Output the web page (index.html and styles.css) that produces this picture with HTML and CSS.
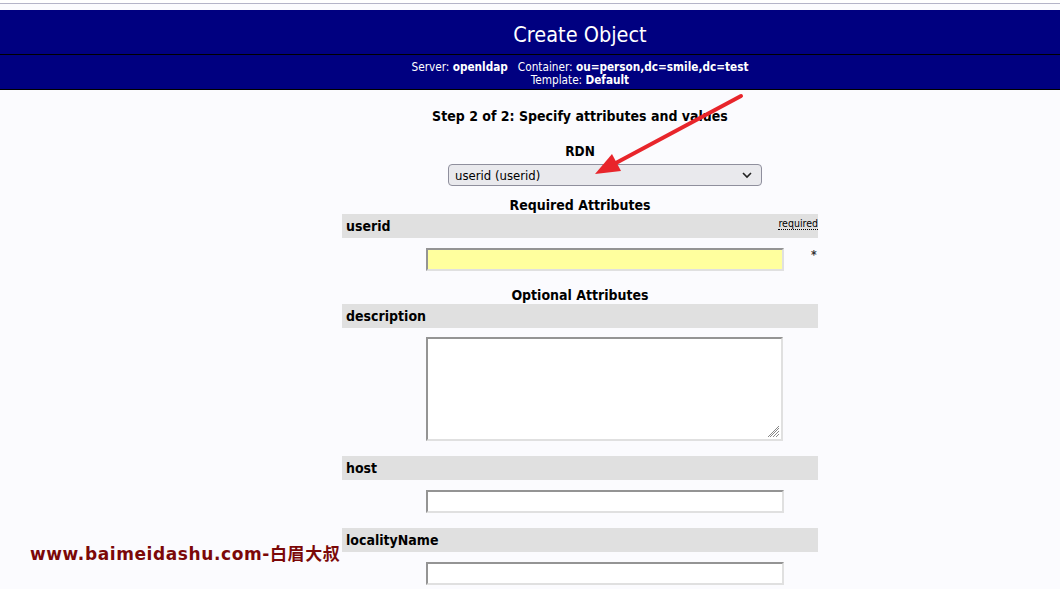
FILE: index.html
```html
<!DOCTYPE html>
<html lang="en">
<head>
    <meta charset="UTF-8">
    <title>Create Object</title>
    <link rel="stylesheet" href="styles.css">
</head>
<body>
    <div class="topline"></div>
    <div class="head-title">Create Object</div>
    <div class="head-sub">
        <div>Server: <b>openldap</b> &nbsp; Container: <b>ou=person,dc=smile,dc=test</b></div>
        <div>Template: <b>Default</b></div>
    </div>

    <div class="page">
        <div class="step">Step 2 of 2: Specify attributes and values</div>

        <div class="rdn-label">RDN</div>
        <div class="rdn-select">
            <span>userid (userid)</span>
            <svg width="12" height="8" viewBox="0 0 12 8"><path d="M2 2l4 4 4-4" fill="none" stroke="#222" stroke-width="1.6"/></svg>
        </div>

        <div class="attrs">
            <div class="group-title">Required Attributes</div>
            <div class="attr-bar"><span>userid</span><span class="req">required</span></div>
            <div class="attr-value">
                <div class="field field-req"></div>
                <span class="star">*</span>
            </div>

            <div class="group-title">Optional Attributes</div>
            <div class="attr-bar"><span>description</span></div>
            <div class="attr-value">
                <div class="field textarea">
                    <svg class="grip" width="12" height="12" viewBox="0 0 12 12"><path d="M11 2L2 11M11 5L5 11M11 8L8 11M11 0L0 11" stroke="#888" stroke-width="1"/></svg>
                </div>
            </div>

            <div class="attr-bar"><span>host</span></div>
            <div class="attr-value">
                <div class="field"></div>
            </div>

            <div class="attr-bar"><span>localityName</span></div>
            <div class="attr-value">
                <div class="field"></div>
            </div>
        </div>
    </div>

    <svg class="arrow" width="1060" height="589" viewBox="0 0 1060 589">
        <line x1="741" y1="96" x2="614" y2="164" stroke="#e8252b" stroke-width="4" stroke-linecap="round"/>
        <polygon points="595,174 612,154 621,171" fill="#e8252b"/>
    </svg>
    <div class="watermark">www.baimeidashu.com-白眉大叔</div>
</body>
</html>
```

FILE: styles.css
```css
body {
    margin: 0;
    background: #fbfbfe;
    font-family: "DejaVu Sans Condensed", "DejaVu Sans", sans-serif;
    color: #000;
    height: 589px;
    overflow: hidden;
}
.topline {
    height: 3px;
    border-bottom: 1px solid #b4b4c8;
    margin-bottom: 6px;
    background: #fff;
}
.head-title {
    background: #000080;
    color: #fff;
    text-align: center;
    font-size: 21.5px;
    height: 44px;
    line-height: 49px;
    padding-left: 100px;
    border-bottom: 1px solid #000;
}
.head-sub {
    background: #000080;
    color: #fff;
    text-align: center;
    font-size: 11.7px;
    line-height: 13px;
    height: 35px;
    padding: 6px 0 0 100px;
    box-sizing: border-box;
    border-bottom: 1px solid #000;
}
.page {
    display: flex;
    flex-direction: column;
    align-items: center;
    margin-left: 100px;
}
.step {
    font-weight: bold;
    font-size: 14px;
    margin-top: 17px;
    line-height: 18px;
}
.rdn-label {
    font-weight: bold;
    font-size: 13.5px;
    margin-top: 17px;
    line-height: 18px;
}
.rdn-select {
    margin: 4px 0 0 50px;
    width: 314px;
    height: 22px;
    box-sizing: border-box;
    border: 1px solid #8f8f9d;
    border-radius: 4px;
    background: #e9e9ed;
    display: flex;
    align-items: center;
    justify-content: space-between;
    padding: 0 8px 0 6px;
    font-size: 13px;
}
.attrs {
    width: 476px;
    margin-top: 10px;
}
.group-title {
    font-weight: bold;
    font-size: 14px;
    text-align: center;
    line-height: 18px;
}
.attr-bar {
    background: #e0e0e0;
    height: 24px;
    display: flex;
    align-items: center;
    justify-content: space-between;
    padding-left: 4px;
    font-weight: bold;
    font-size: 14px;
}
.req {
    font-weight: normal;
    font-size: 10.5px;
    border-bottom: 1px dotted #000;
    line-height: 11px;
    margin-top: -4px;
}
.attr-value {
    display: flex;
    align-items: flex-start;
    padding: 10px 0 15px 84px;
}
.field {
    width: 358px;
    height: 23px;
    box-sizing: border-box;
    background: #fff;
    border: 2px solid;
    border-color: #949494 #e0e0e0 #e0e0e0 #949494;
}
.field-req {
    background: #ffff9e;
}
.textarea {
    width: 357px;
    height: 104px;
    margin-top: -1px;
    position: relative;
}
.grip {
    position: absolute;
    right: 1px;
    bottom: 1px;
}
.star {
    font-size: 12px;
    font-weight: bold;
    margin-left: 27px;
    color: #333;
}
.arrow {
    position: absolute;
    left: 0;
    top: 0;
    pointer-events: none;
}
.watermark {
    position: absolute;
    left: 30px;
    top: 540px;
    color: #7b0808;
    font-family: "DejaVu Sans", "Noto Sans CJK SC", sans-serif;
    font-weight: bold;
    font-size: 17px;
    letter-spacing: 0.6px;
}
```
